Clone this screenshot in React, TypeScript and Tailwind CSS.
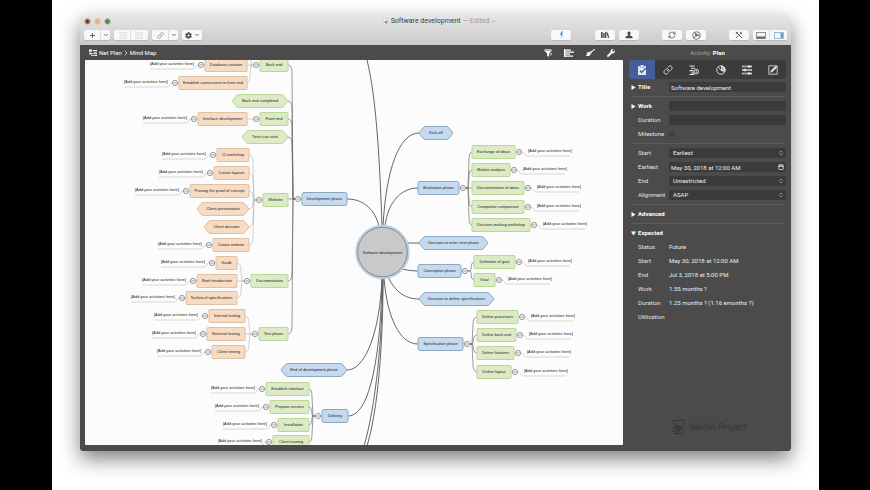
import type { FC, ReactNode } from "react";
import { useState } from "react";
import {
  Calendar,
  ChevronDown,
  ChevronRight,
  ChevronsUpDown,
  Link,
  Plus,
  RefreshCw,
} from "lucide-react";
import { FaBroom, FaWrench, FaCog } from "react-icons/fa";

type Shape = "box" | "hex";
type Side = "left" | "right";

type MapNode = {
  label: string;
  x: number;
  y: number; // vertical centre
  w: number;
  shape?: Shape;
  leaf?: boolean; // draws the "add activities" placeholder
  children?: MapNode[];
};

const leftBranches: MapNode[] = [
  {
    label: "Development phase",
    x: 217,
    y: 139,
    w: 45,
    children: [
      {
        label: "Back end",
        x: 175,
        y: 5,
        w: 28,
        children: [
          { label: "Database creation", x: 120, y: 5, w: 42, leaf: true },
          { label: "Establish connections to front end", x: 94, y: 23, w: 68, leaf: true },
        ],
      },
      { label: "Back end completed", x: 147, y: 41, w: 56, shape: "hex" },
      {
        label: "Front end",
        x: 175,
        y: 59,
        w: 28,
        children: [{ label: "Interface development", x: 113, y: 59, w: 49, leaf: true }],
      },
      { label: "Tests can start", x: 157, y: 77, w: 46, shape: "hex" },
      {
        label: "Website",
        x: 178,
        y: 140,
        w: 25,
        children: [
          { label: "CI workshop", x: 132, y: 95, w: 32, leaf: true },
          { label: "Create layouts", x: 129, y: 113, w: 35, leaf: true },
          { label: "Proving the proof of concept", x: 105, y: 131, w: 59, leaf: true },
          { label: "Client presentation", x: 112, y: 149, w: 52, shape: "hex" },
          { label: "Client decision", x: 119, y: 167, w: 45, shape: "hex" },
          { label: "Create website", x: 128, y: 185, w: 36, leaf: true },
        ],
      },
      {
        label: "Documentation",
        x: 166,
        y: 221,
        w: 37,
        children: [
          { label: "Guide", x: 131, y: 203, w: 21, leaf: true },
          { label: "Brief introduction", x: 112, y: 221, w: 40, leaf: true },
          { label: "Technical specifications", x: 101, y: 238, w: 51, leaf: true },
        ],
      },
      {
        label: "Test phase",
        x: 174,
        y: 274,
        w: 29,
        children: [
          { label: "Internal testing", x: 124, y: 256, w: 36, leaf: true },
          { label: "External testing", x: 122, y: 274, w: 38, leaf: true },
          { label: "Client testing", x: 127, y: 292, w: 33, leaf: true },
        ],
      },
    ],
  },
  { label: "End of development phase", x: 196, y: 310, w: 66, shape: "hex" },
  {
    label: "Delivery",
    x: 237,
    y: 356,
    w: 26,
    children: [
      { label: "Establish interface", x: 181, y: 329, w: 43, leaf: true },
      { label: "Prepare servers", x: 185, y: 347, w: 39, leaf: true },
      { label: "Installation", x: 193, y: 365, w: 31, leaf: true },
      { label: "Client training", x: 188, y: 382, w: 36, leaf: true },
    ],
  },
];

const rightBranches: MapNode[] = [
  { label: "Kick-off", x: 334, y: 73, w: 34, shape: "hex" },
  {
    label: "Evaluation phase",
    x: 333,
    y: 128,
    w: 41,
    children: [
      { label: "Exchange of ideas", x: 387, y: 92, w: 43, leaf: true },
      { label: "Market analysis", x: 387, y: 110, w: 38, leaf: true },
      { label: "Documentation of ideas", x: 387, y: 128, w: 52, leaf: true },
      { label: "Competitor comparison", x: 387, y: 147, w: 52, leaf: true },
      { label: "Decision-making workshop", x: 387, y: 165, w: 58, leaf: true },
    ],
  },
  { label: "Decision to enter next phase", x: 334, y: 183, w: 69, shape: "hex" },
  {
    label: "Conception phase",
    x: 333,
    y: 211,
    w: 43,
    children: [
      { label: "Definition of goal", x: 389, y: 202, w: 41, leaf: true },
      { label: "Goal", x: 389, y: 220, w: 21, leaf: true },
    ],
  },
  { label: "Decision to define specifications", x: 334, y: 239, w: 75, shape: "hex" },
  {
    label: "Specification phase",
    x: 333,
    y: 284,
    w: 45,
    children: [
      { label: "Define processes", x: 392, y: 257, w: 41, leaf: true },
      { label: "Define back end", x: 392, y: 275, w: 39, leaf: true },
      { label: "Define features", x: 392, y: 293, w: 37, leaf: true },
      { label: "Define layout", x: 392, y: 312, w: 34, leaf: true },
    ],
  },
];

// Curves between the root circle and the main branches
const rootEdges = [
  "M282 0 C292 40 295 110 297 166",
  "M298 166 C301 110 314 73 334 73",
  "M300 166 C303 142 316 128 333 128",
  "M262 139 C279 139 290 150 294 166",
  "M322 183 H334",
  "M317 209 Q325 211 333 211",
  "M303 217 C311 233 321 239 334 239",
  "M299 218 C302 256 314 284 333 284",
  "M297 218 C295 270 281 310 262 310",
  "M297 218 C296 290 286 356 263 356",
  "M298 218 C297 280 291 345 279 386",
  "M298 218 C298 285 293 350 282 386",
];

const palette = [
  { fill: "#c5daee", stroke: "#8ba8c2" },
  { fill: "#dcebc5", stroke: "#bcd59b" },
  { fill: "#f6dcc4", stroke: "#e0c0a0" },
];

const H = 13;

type Placed = { node: MapNode; level: number; side: Side };

const flatten = (nodes: MapNode[], side: Side, level = 0): Placed[] =>
  nodes.flatMap((node) => [
    { node, level, side },
    ...flatten(node.children ?? [], side, level + 1),
  ]);

const placed = [...flatten(leftBranches, "left"), ...flatten(rightBranches, "right")];

const outer = (n: MapNode, side: Side) => (side === "left" ? n.x : n.x + n.w);
const inner = (n: MapNode, side: Side) => (side === "left" ? n.x + n.w : n.x);

const childEdge = (parent: MapNode, child: MapNode, side: Side) => {
  const dir = side === "left" ? -1 : 1;
  const from = outer(parent, side) + dir * 7;
  const to = inner(child, side);
  const mid = from + dir * 2;
  const gap = parent.y - child.y;
  if (Math.abs(gap) < 2) return `M${from} ${parent.y} H${to}`;
  const bend = Math.sign(gap) * Math.min(8, Math.abs(gap));
  return `M${from} ${parent.y} H${mid} L${mid + dir} ${child.y + bend} Q${mid + dir} ${child.y} ${to} ${child.y}`;
};

const NodeShape: FC<Placed> = ({ node, level, side }) => {
  const { x, y, w } = node;
  const dir = side === "left" ? -1 : 1;
  const edge = outer(node, side);
  const colors = palette[level];
  const hasToggle = node.leaf || node.children;
  return (
    <g>
      {node.children?.map((c) => (
        <path
          key={c.label}
          d={childEdge(node, c, side)}
          fill="none"
          stroke={level === 0 ? "#6e6e6e" : "#b4b4b4"}
          strokeWidth={level === 0 ? 0.7 : 0.6}
        />
      ))}
      {node.leaf && (
        <path
          d={`M${edge + dir * 7} ${y} C${edge + dir * 10} ${y} ${edge + dir * 9} ${y + 4} ${edge + dir * 12} ${y + 4} H${edge + dir * 55}`}
          fill="none"
          stroke="#bdbdbd"
          strokeWidth="0.6"
        />
      )}
      {hasToggle && (
        <g stroke="#6b6b6b" strokeWidth="0.7">
          <path d={`M${edge} ${y} h${dir * 2}`} stroke="#b4b4b4" />
          <circle cx={edge + dir * 4} cy={y} r="2.6" fill="#fcfcfc" />
          <path d={`M${edge + dir * 4 - 1.5} ${y} h3`} />
        </g>
      )}
      {node.shape === "hex" ? (
        <path
          d={`M${x} ${y} l4 -5 q1 -1.5 3 -1.5 H${x + w - 7} q2 0 3 1.5 l4 5 l-4 5 q-1 1.5 -3 1.5 H${x + 7} q-2 0 -3 -1.5 Z`}
          fill={colors.fill}
          stroke={colors.stroke}
        />
      ) : (
        <rect
          x={x}
          y={y - H / 2}
          width={w}
          height={H}
          rx={level === 0 ? 2 : 0.8}
          fill={colors.fill}
          stroke={colors.stroke}
        />
      )}
    </g>
  );
};

const MindMap: FC = () => (
  <div className="relative h-[385px] overflow-hidden rounded-[1px] bg-[#fcfcfc] font-['Liberation_Sans',sans-serif] text-[4px] leading-[6px] text-[#1c1c1c]">
    <svg className="absolute left-0 top-0" width="538" height="385" aria-hidden="true">
      <g fill="none" stroke="#555" strokeWidth="0.9">
        {rootEdges.map((d) => (
          <path key={d} d={d} />
        ))}
      </g>
      <path d="M166 0 V8" stroke="#b4b4b4" strokeWidth="0.6" />
      {placed.map((p) => (
        <NodeShape key={p.node.label} {...p} />
      ))}
      <circle cx="297.5" cy="192" r="26.2" fill="#c8c8c8" stroke="#bcd2e6" strokeWidth="2" />
      <circle cx="297.5" cy="192" r="24.8" fill="#c9c9c9" stroke="#777" strokeWidth="0.8" />
    </svg>
    <div className="absolute left-[272px] top-[190px] w-[51px] text-center whitespace-nowrap">
      Software development
    </div>
    {placed.map(({ node, side }) => (
      <div key={node.label}>
        <div
          className="absolute flex justify-center whitespace-nowrap"
          style={{ left: node.x, top: node.y - 3, width: node.w }}
        >
          {node.label}
        </div>
        {node.leaf && (
          <div
            className="absolute w-[42px] whitespace-nowrap"
            style={{
              left: side === "left" ? node.x - 55 : node.x + node.w + 13,
              top: node.y - 4,
            }}
          >
            [Add your activities here]
          </div>
        )}
      </div>
    ))}
  </div>
);

const ToolButton: FC<{ label: string; className?: string; children: ReactNode }> = ({
  label,
  className = "w-5",
  children,
}) => (
  <button
    aria-label={label}
    className={`flex h-[10px] items-center justify-center bg-[#f8f8f8] text-[#4a4a4a] ${className}`}
  >
    {children}
  </button>
);

const ToolGroup: FC<{ children: ReactNode }> = ({ children }) => (
  <div className="flex divide-x divide-[#dedede] overflow-hidden rounded-[2px] shadow-[0_1px_1px_rgba(0,0,0,0.12)]">
    {children}
  </div>
);

const IndentIcon: FC<{ flip?: boolean }> = ({ flip }) => (
  <svg width="9" height="7" viewBox="0 0 9 7" stroke="#cfcfcf" fill="none" strokeWidth="0.8">
    <path d={flip ? "M0 1h8M0 3.5h4M0 6h8M7.5 2L5.5 3.5l2 1.5" : "M1 1h8M5 3.5h4M1 6h8M1.5 2l2 1.5-2 1.5"} />
  </svg>
);

const Toolbar: FC = () => (
  <header className="h-[30px] rounded-t-[4px] bg-linear-to-b from-[#e6e6e6] to-[#cbcbcb] px-1 pt-[3px]">
    <div className="relative flex h-[7px] items-center justify-center gap-[2px] text-[7px] leading-[7px]">
      <div className="absolute left-0 top-0 flex gap-[3px]">
        <button aria-label="Close" className="flex size-[7px] items-center justify-center rounded-full border border-[#edbf9c] bg-[#6b6259]">
          <span className="size-px bg-black" />
        </button>
        <button aria-label="Minimize" className="size-[7px] rounded-full border border-[#ecc8a4] bg-[#d9bb9c]" />
        <button aria-label="Zoom" className="size-[7px] rounded-full border border-[#c3dda8] bg-[#70796a]" />
      </div>
      <svg className="ml-2" width="6" height="7" viewBox="0 0 6 7">
        <path d="M0.5 0.5h5v6h-5z" fill="#f2f2f2" stroke="#c4c4c4" strokeWidth="0.5" />
        <path d="M1.4 4.6C2 6 4 6 4.5 4.4L4.2 1.5 3 3.4 2 2.6z" fill="#8b8b8b" />
      </svg>
      <h1 className="text-[#3c3c3c]">Software development</h1>
      <span className="text-[#9b9b9b]">— Edited</span>
      <ChevronDown size={5} strokeWidth={3} color="#9b9b9b" />
    </div>
    <div className="mt-[5px] flex">
      <ToolGroup>
        <ToolButton label="Add" className="w-[17px]">
          <Plus size={7} strokeWidth={3} />
        </ToolButton>
        <ToolButton label="Add options" className="w-[9px]">
          <ChevronDown size={6} strokeWidth={3} />
        </ToolButton>
      </ToolGroup>
      <div className="ml-1 flex">
        <ToolGroup>
          <ToolButton label="Indent" className="w-[17px]">
            <IndentIcon />
          </ToolButton>
          <ToolButton label="Outdent" className="w-[17px]">
            <IndentIcon flip />
          </ToolButton>
        </ToolGroup>
      </div>
      <div className="ml-1 flex">
        <ToolGroup>
          <ToolButton label="Link" className="w-[17px]">
            <Link size={7} color="#7a7a7a" />
          </ToolButton>
          <ToolButton label="Link options" className="w-[9px]">
            <ChevronDown size={6} strokeWidth={3} />
          </ToolButton>
        </ToolGroup>
      </div>
      <div className="ml-1 flex">
        <ToolGroup>
          <ToolButton label="Actions">
            <FaCog size={7} />
            <ChevronDown className="ml-[2px]" size={6} strokeWidth={3} />
          </ToolButton>
        </ToolGroup>
      </div>
      <div className="ml-auto flex">
        <ToolGroup>
          <ToolButton label="Flash">
            <svg width="5" height="8" viewBox="0 0 5 8">
              <path d="M4.2 0.5H2.2L1 4h1.4L1.8 7.5 4 3.2H2.9z" fill="#5c95cf" />
            </svg>
          </ToolButton>
        </ToolGroup>
      </div>
      <div className="ml-6 flex gap-1">
        <ToolGroup>
          <ToolButton label="Library">
            <svg width="10" height="8" viewBox="0 0 10 8" fill="#4a4a4a">
              <path d="M1 1h1.6v6H1zM3.2 2h1.4v5H3.2zM5 0.8h1.3v6.2H5zM6.5 1.8l1.3-.4L9.3 6.6 8 7z" />
            </svg>
          </ToolButton>
        </ToolGroup>
        <ToolGroup>
          <ToolButton label="Resources">
            <svg width="8" height="8" viewBox="0 0 8 8" fill="#4a4a4a">
              <path d="M4 .5c1.2 0 1.7.8 1.5 1.9C5.3 3.4 4.8 3.6 4.8 4.3c0 .5 2.5.6 2.7 1.7V7.3H.5V6c.2-1.1 2.7-1.2 2.7-1.7 0-.7-.5-.9-.7-1.9C2.3 1.3 2.8.5 4 .5z" />
            </svg>
          </ToolButton>
        </ToolGroup>
      </div>
      <div className="ml-[23px] flex gap-1">
        <ToolGroup>
          <ToolButton label="Sync">
            <RefreshCw size={8} />
          </ToolButton>
        </ToolGroup>
        <ToolGroup>
          <ToolButton label="Publish">
            <svg width="9" height="9" viewBox="0 0 9 9" fill="none" stroke="#5a5a5a" strokeWidth="0.8">
              <circle cx="4.5" cy="4.5" r="3.8" />
              <path d="M3 1.2L4 4.5 1.5 7M4 4.5l4 .3M3.2 2.5l3.3 1" />
              <circle cx="4.2" cy="4.5" r="0.7" fill="#5a5a5a" />
            </svg>
          </ToolButton>
        </ToolGroup>
      </div>
      <div className="ml-[23px] flex gap-1">
        <ToolGroup>
          <ToolButton label="Settings">
            <svg width="8" height="8" viewBox="0 0 8 8" fill="none" stroke="#4a4a4a">
              <path d="M1 7l2.5-2.5M4.6 3.4L6.5 1.5M1 1l6 6" strokeWidth="0.9" />
              <path d="M0.8 2.2h1.5V.8M5.5.8V2.5h1.7" strokeWidth="0.7" />
            </svg>
          </ToolButton>
        </ToolGroup>
        <ToolGroup>
          <ToolButton label="Toggle details" className="w-[17px]">
            <svg width="10" height="7" viewBox="0 0 10 7">
              <rect x="0.5" y="0.5" width="9" height="6" fill="none" stroke="#777" strokeWidth="0.8" />
              <path d="M1 4.5h8v2H1z" fill="#666" />
            </svg>
          </ToolButton>
          <ToolButton label="Toggle inspector" className="w-[17px]">
            <svg width="10" height="7" viewBox="0 0 10 7">
              <rect x="0.5" y="0.5" width="9" height="6" fill="none" stroke="#86acd0" strokeWidth="0.8" />
              <path d="M6.5 1H9v5H6.5z" fill="#6d9cc8" />
            </svg>
          </ToolButton>
        </ToolGroup>
      </div>
    </div>
  </header>
);

const PathBar: FC = () => (
  <nav className="flex h-[15px] items-center pl-1 pr-2 text-white">
    <svg className="mr-[2px]" width="8" height="7" viewBox="0 0 8 7" fill="#fff">
      <path d="M0 0.5h3v2H0zM4 1h4v1.3H4zM1 4h2.5v1H1zM4.5 3.5H8v1.3H4.5zM2 5.8h3v1H2zM5.5 5.7H8V7H5.5zM0.5 2h.7v4H.5z" />
    </svg>
    <a href="#plan">Net Plan</a>
    <ChevronRight size={8} strokeWidth={2} />
    <a href="#map">Mind Map</a>
    <div className="ml-auto flex gap-3">
      <button aria-label="Filter">
        <svg width="8" height="8" viewBox="0 0 8 8" fill="#fff">
          <path d="M0 1.2C0 0 8 0 8 1.2L5 4.6V8L3.2 6.8V4.6z" />
          <path d="M1.3 1.4h5.4" stroke="#4b4b4b" strokeWidth="0.6" />
          <path d="M5.8 4.6H8M5.8 6H7.5" stroke="#fff" strokeWidth="0.7" />
        </svg>
      </button>
      <button aria-label="Level">
        <svg width="10" height="8" viewBox="0 0 10 8" stroke="#fff" strokeWidth="1.2">
          <path d="M.6 0v8M1 1.2h6M1 3.2h9M1 5.2h5M1 7.2h8" />
        </svg>
      </button>
      <button aria-label="Style">
        <FaBroom size={9} />
      </button>
      <button aria-label="Settings">
        <FaWrench size={8} />
      </button>
    </div>
  </nav>
);

const TabIcon: FC<{ children: ReactNode }> = ({ children }) => (
  <svg width="10" height="10" viewBox="0 0 10 10" fill="none" stroke="currentColor">
    {children}
  </svg>
);

const tabs = [
  {
    key: "plan",
    label: "Plan",
    icon: (
      <TabIcon>
        <path d="M1.5 1.5h7v8h-7z" fill="#dfe7f5" />
        <path d="M3.2 0h3.600v2.2H3.2z" fill="#fff" stroke="#435f9a" strokeWidth="0.5" />
        <path d="M3 5.5l1.6 2L9 3" stroke="#435f9a" strokeWidth="1.3" />
      </TabIcon>
    ),
  },
  { key: "link", label: "Dependencies", icon: <Link size={10} /> },
  {
    key: "cost",
    label: "Finances",
    icon: (
      <TabIcon>
        <path d="M.5 1h5M2 3.3h4M.5 5.6h4M2 8h3M.5 9.5h5" strokeWidth="1.1" />
        <circle cx="7.3" cy="6.6" r="2.2" />
        <path d="M7.3 5.3v2.6" strokeWidth="0.8" />
      </TabIcon>
    ),
  },
  {
    key: "time",
    label: "Calendar",
    icon: (
      <TabIcon>
        <circle cx="5" cy="5" r="4.2" strokeWidth="0.9" />
        <path d="M5 5V.8A4.2 4.2 0 0 1 8.7 7z" fill="currentColor" stroke="none" />
        <path d="M6.2 2v1.5M7.8 4.2l-1.3.6" stroke="#3b3b3b" strokeWidth="0.7" />
        <path d="M2.5 2.5L5 5.2l2.3 1.3" strokeWidth="0.9" />
      </TabIcon>
    ),
  },
  {
    key: "fields",
    label: "Fields",
    icon: (
      <TabIcon>
        <path d="M0 1.5h10M0 5h10M0 8.5h10" strokeWidth="1.4" />
        <path d="M7 .3v2.4M3 3.8v2.4M7 7.3v2.4" strokeWidth="1.5" />
        <path d="M1 1.5h4.500M5 5h4M1 8.500h4.500" stroke="#3b3b3b" strokeWidth="0.4" />
      </TabIcon>
    ),
  },
  {
    key: "style",
    label: "Style",
    icon: (
      <TabIcon>
        <path d="M.8 .8h8.400v8.400H.8z" strokeWidth="0.8" />
        <path d="M2 8l.7-2.400L8 .3l1.700 1.600L4.400 7.200z" fill="currentColor" stroke="#3b3b3b" strokeWidth="0.4" />
      </TabIcon>
    ),
  },
];

const Triangle: FC<{ open?: boolean }> = ({ open }) => (
  <svg width="5" height="5" viewBox="0 0 5 5" fill="#fff">
    <path d={open ? "M0 .5h5L2.5 4.5z" : "M.5 0v5l4-2.5z"} />
  </svg>
);

const Row: FC<{ label: string; id?: string; toggle?: "open" | "closed"; children?: ReactNode }> = ({
  label,
  id,
  toggle,
  children,
}) => (
  <div className="flex h-[14px] items-center">
    <div className="flex w-[9px] items-center pl-[2px]">
      {toggle && (
        <button aria-label={`Show ${label}`}>
          <Triangle open={toggle === "open"} />
        </button>
      )}
    </div>
    <label htmlFor={id} className={`w-[31px] ${toggle ? "font-bold text-white" : ""}`}>
      {label}
    </label>
    {children}
  </div>
);

const fieldClass = "h-[10px] w-full min-w-0 appearance-none rounded-[1px] bg-[#3b3b3b] text-[#f0f0f0] outline-none";

const SelectRow: FC<{ label: string; id: string; options: string[] }> = ({ label, id, options }) => (
  <Row label={label} id={id}>
    <div className="relative flex flex-1">
      <select id={id} className={`${fieldClass} px-1`}>
        {options.map((o) => (
          <option key={o}>{o}</option>
        ))}
      </select>
      <ChevronsUpDown className="pointer-events-none absolute right-[2px] top-[2px]" size={6} />
    </div>
  </Row>
);

const Divider = () => <hr className="mx-[2px] my-[2px] border-[#5c5c5c]" />;

const expected = [
  ["Status", "Future"],
  ["Start", "May 30, 2018 at 12:00 AM"],
  ["End", "Jul 3, 2018 at 5:00 PM"],
  ["Work", "1.55 months ?"],
  ["Duration", "1.25 months ? (1.16 emonths ?)"],
  ["Utilization", ""],
];

const Inspector: FC = () => {
  const [activeTab, setActiveTab] = useState("plan");

  return (
    <aside className="flex w-[168px] flex-col pl-[6px] pr-[5px] text-[#e2e2e2]">
      <div className="flex h-[15px] items-center justify-center text-[#a5a5a5]">
        Activity:&nbsp;<strong className="text-white">Plan</strong>
      </div>
      <div className="mb-px grid h-[19px] grid-cols-6 overflow-hidden rounded-[2px] bg-[#3b3b3b]">
        {tabs.map((t) => (
          <button
            key={t.key}
            aria-label={t.label}
            onClick={() => setActiveTab(t.key)}
            className={`flex items-center justify-center text-[#e6e6e6] ${
              activeTab === t.key ? "bg-[#435f9a]" : ""
            }`}
          >
            {t.icon}
          </button>
        ))}
      </div>
      <Row label="Title" id="title" toggle="closed">
        <input id="title" className={`${fieldClass} flex-1 px-[2px]`} defaultValue="Software development" />
      </Row>
      <Divider />
      <Row label="Work" id="work" toggle="closed">
        <input id="work" className={`${fieldClass} flex-1 px-[2px]`} />
      </Row>
      <Row label="Duration" id="duration">
        <input id="duration" className={`${fieldClass} flex-1 px-[2px]`} />
      </Row>
      <Row label="Milestone" id="milestone">
        <input id="milestone" type="checkbox" className="size-[6px] appearance-none rounded-[1px] bg-[#404040]" />
      </Row>
      <Divider />
      <SelectRow label="Start" id="start" options={["Earliest", "Latest"]} />
      <Row label="Earliest" id="earliest">
        <div className="relative flex flex-1">
          <input id="earliest" className={`${fieldClass} px-[2px]`} defaultValue="May 30, 2018 at 12:00 AM" />
          <Calendar className="pointer-events-none absolute right-[2px] top-[2px]" size={6} strokeWidth={3} />
        </div>
      </Row>
      <SelectRow label="End" id="end" options={["Unrestricted", "Latest"]} />
      <SelectRow label="Alignment" id="alignment" options={["ASAP", "ALAP"]} />
      <Divider />
      <Row label="Advanced" toggle="closed" />
      <Divider />
      <Row label="Expected" toggle="open" />
      {expected.map(([label, value]) => (
        <Row key={label} label={label}>
          <span className="whitespace-nowrap text-[#f0f0f0]">{value}</span>
        </Row>
      ))}
      <div className="mt-auto mb-4 ml-[42px] flex items-center gap-1 text-[9px] leading-4 font-medium text-[#393939]">
        <svg width="15" height="16" viewBox="0 0 15 16" fill="none" stroke="#393939">
          <path d="M1 1.5c4 1.5 9-1.5 13 0M2 4c3 0 2 4 0 5 1 4 4 6 7 6M4 3.5c0 3 5 6 9 4M1 12.5h4M10 10c2 0 3.5 1 4 3" />
          <path d="M5.5 6l3.5 1 .5 4.5-3 1.5-2-3z" fill="#393939" />
          <path d="M3 14.5h10M12 2.5c2 2 1 4-1 6" />
        </svg>
        Merlin Project
      </div>
    </aside>
  );
};

export const App: FC = () => (
  <div className="min-h-screen bg-black pl-[52px] pr-[51px] font-['Roboto','Liberation_Sans',sans-serif] text-[6px] leading-[8px]">
    <main className="min-h-screen overflow-hidden bg-white px-7 pt-[15px] pb-[39px]">
      <div className="rounded-[4px] shadow-[0_8px_20px_rgba(0,0,0,0.5)]">
        <Toolbar />
        <div className="flex rounded-b-[3px] bg-[#4b4b4b]">
          <div className="min-w-0 flex-1 pb-[6px] pl-[5px]">
            <PathBar />
            <MindMap />
          </div>
          <Inspector />
        </div>
      </div>
    </main>
  </div>
);

export default App;
